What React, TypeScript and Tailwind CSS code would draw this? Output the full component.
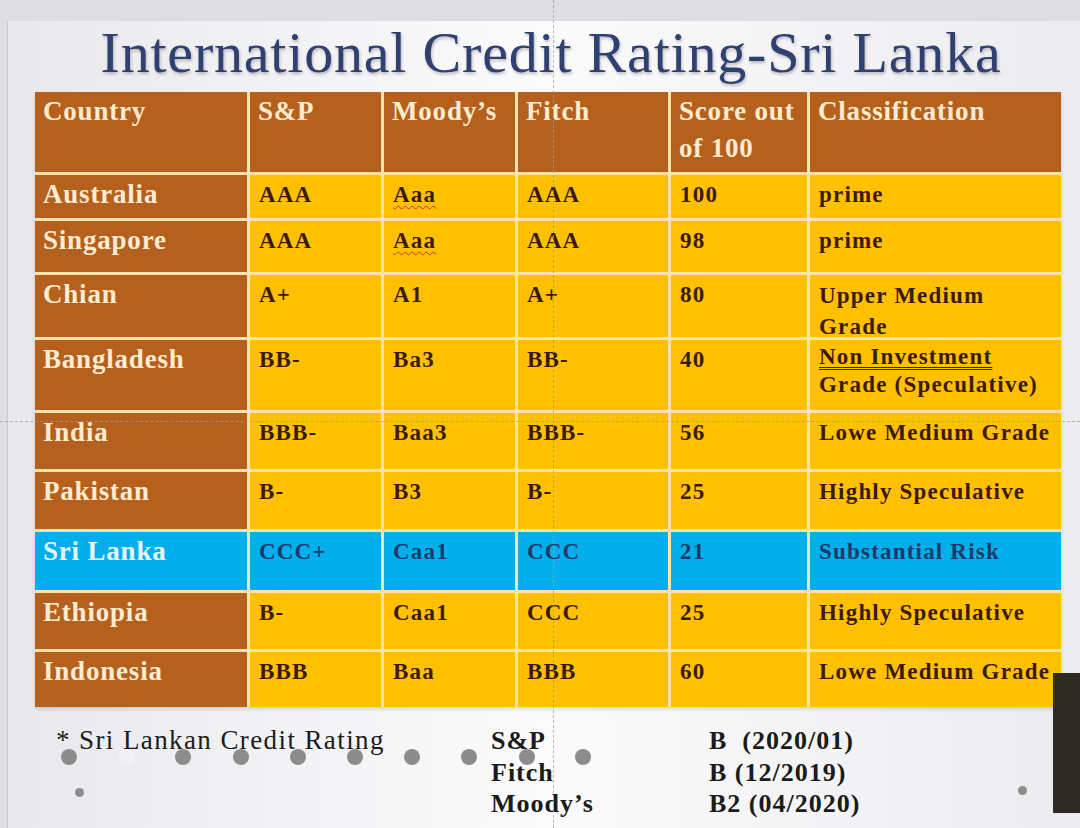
import React from "react";

type Row = {
  country: string;
  sp: string;
  moody: string;
  fitch: string;
  score: string;
  cls: React.ReactNode;
  h: string;
  wavy?: boolean;
  highlight?: boolean;
};

const rows: Row[] = [
  { country: "Australia", sp: "AAA", moody: "Aaa", fitch: "AAA", score: "100", cls: "prime", h: "h-[43px]", wavy: true },
  { country: "Singapore", sp: "AAA", moody: "Aaa", fitch: "AAA", score: "98", cls: "prime", h: "h-[51px]", wavy: true },
  {
    country: "Chian",
    sp: "A+",
    moody: "A1",
    fitch: "A+",
    score: "80",
    cls: (
      <span className="block leading-[31px]">
        Upper Medium
        <br />
        Grade
      </span>
    ),
    h: "h-[62px]",
  },
  {
    country: "Bangladesh",
    sp: "BB-",
    moody: "Ba3",
    fitch: "BB-",
    score: "40",
    cls: (
      <span className="block leading-[28px] -mt-[2px]">
        <span className="underline decoration-double decoration-1 underline-offset-[3px]">Non Investment</span>
        <br />
        Grade (Speculative)
      </span>
    ),
    h: "h-[70px]",
  },
  { country: "India", sp: "BBB-", moody: "Baa3", fitch: "BBB-", score: "56", cls: "Lowe Medium Grade", h: "h-[56px]" },
  { country: "Pakistan", sp: "B-", moody: "B3", fitch: "B-", score: "25", cls: "Highly Speculative", h: "h-[57px]" },
  { country: "Sri Lanka", sp: "CCC+", moody: "Caa1", fitch: "CCC", score: "21", cls: "Substantial Risk", h: "h-[58px]", highlight: true },
  { country: "Ethiopia", sp: "B-", moody: "Caa1", fitch: "CCC", score: "25", cls: "Highly Speculative", h: "h-[56px]" },
  { country: "Indonesia", sp: "BBB", moody: "Baa", fitch: "BBB", score: "60", cls: "Lowe Medium Grade", h: "h-[55px]" },
];

const dots = [
  { x: "left-[61px]", c: "bg-[#8c8c8c]" },
  { x: "left-[118px]", c: "bg-[#f1f1f3]" },
  { x: "left-[175px]", c: "bg-[#8c8c8c]" },
  { x: "left-[233px]", c: "bg-[#8c8c8c]" },
  { x: "left-[290px]", c: "bg-[#8c8c8c]" },
  { x: "left-[347px]", c: "bg-[#8c8c8c]" },
  { x: "left-[404px]", c: "bg-[#8c8c8c]" },
  { x: "left-[461px]", c: "bg-[#8c8c8c]" },
  { x: "left-[519px]", c: "bg-[#8c8c8c]" },
  { x: "left-[575px]", c: "bg-[#8c8c8c]" },
];

function HeadCell({ children }: { children: React.ReactNode }) {
  return (
    <div className="h-[80px] bg-[#b5601c] pl-[8px] pt-[1px] text-[27px] leading-[37px] font-bold tracking-[0.8px] text-[#fdebd0]">
      {children}
    </div>
  );
}

export default function App() {
  return (
    <div className="relative w-[1080px] h-[828px] overflow-hidden bg-[#dedee2] font-['Liberation_Serif',serif]">
      <div className="h-[12px]" />
      <div className="ml-[7px] h-[816px] border-l border-[#c9c9ce] bg-gradient-to-r from-[#e9e9ed] via-[#fbfbfc] to-[#ececef]">
        <h1 className="-ml-[7px] w-[1080px] pl-[20px] mt-[9px] text-center text-[58px] leading-[64px] tracking-[0.8px] text-[#2e4171] [text-shadow:1px_2px_3px_rgba(0,0,20,0.25)]">
          International Credit Rating-Sri Lanka
        </h1>

        <div className="ml-[27px] mt-[7px] w-[1026px] grid grid-cols-[212px_131px_131px_150px_136px_251px] gap-[3px] bg-[#fbe3ad] shadow-[0_2px_4px_rgba(0,0,0,0.15)]">
          <HeadCell>Country</HeadCell>
          <HeadCell>S&amp;P</HeadCell>
          <HeadCell>Moody’s</HeadCell>
          <HeadCell>Fitch</HeadCell>
          <HeadCell>
            Score out
            <br />
            of 100
          </HeadCell>
          <HeadCell>Classification</HeadCell>

          {rows.map((r) => {
            const cell = r.highlight
              ? "bg-[#03aeec] text-[#1c3a68]"
              : "bg-[#ffc000] text-[#3b1b06]";
            const data = `${r.h} ${cell} pl-[9px] pt-[5px] text-[23px] leading-[30px] font-bold tracking-[1.2px]`;
            return (
              <React.Fragment key={r.country}>
                <div
                  className={`${r.h} ${r.highlight ? "bg-[#03aeec] text-[#e4f7f1]" : "bg-[#b5601c] text-[#fdebd2]"} pl-[8px] pt-[4px] text-[27px] leading-[30px] font-bold tracking-[0.8px]`}
                >
                  {r.country}
                </div>
                <div className={data}>{r.sp}</div>
                <div className={data}>
                  <span className={r.wavy ? "underline decoration-wavy decoration-[#c0392b] decoration-1 underline-offset-[3px]" : ""}>
                    {r.moody}
                  </span>
                </div>
                <div className={data}>{r.fitch}</div>
                <div className={data}>{r.score}</div>
                <div className={data}>{r.cls}</div>
              </React.Fragment>
            );
          })}
        </div>

        <div className="mt-[18px] flex text-[#1b1b1b]">
          <div className="ml-[48px] w-[435px] text-[27px] leading-[31.5px] tracking-[1.4px]">
            * Sri Lankan Credit Rating
          </div>
          <div className="w-[218px] text-[26px] leading-[31.5px] font-bold tracking-[1px]">
            <div>S&amp;P</div>
            <div>Fitch</div>
            <div>Moody’s</div>
          </div>
          <div className="text-[26px] leading-[31.5px] font-bold tracking-[1px]">
            <div className="whitespace-pre">B  (2020/01)</div>
            <div>B (12/2019)</div>
            <div>B2 (04/2020)</div>
          </div>
        </div>
      </div>

      {/* video overlay: loading dots, guides, thumbnail edge */}
      {dots.map((d, i) => (
        <div key={i} className={`absolute top-[749px] ${d.x} w-[16px] h-[16px] rounded-full ${d.c}`} />
      ))}
      <div className="absolute left-[75px] top-[788px] w-[9px] h-[9px] rounded-full bg-[#8c8c8c]" />
      <div className="absolute left-[1018px] top-[786px] w-[9px] h-[9px] rounded-full bg-[#8c8c8c]" />
      <div className="absolute left-[553px] top-0 h-[828px] border-l border-dashed border-[#9c9c9c] opacity-70" />
      <div className="absolute left-0 top-[421px] w-[1080px] border-t border-dashed border-[#9c9c9c] opacity-70" />
      <div className="absolute left-[1053px] top-[673px] w-[27px] h-[140px] bg-[#2d2a23]" />
    </div>
  );
}
